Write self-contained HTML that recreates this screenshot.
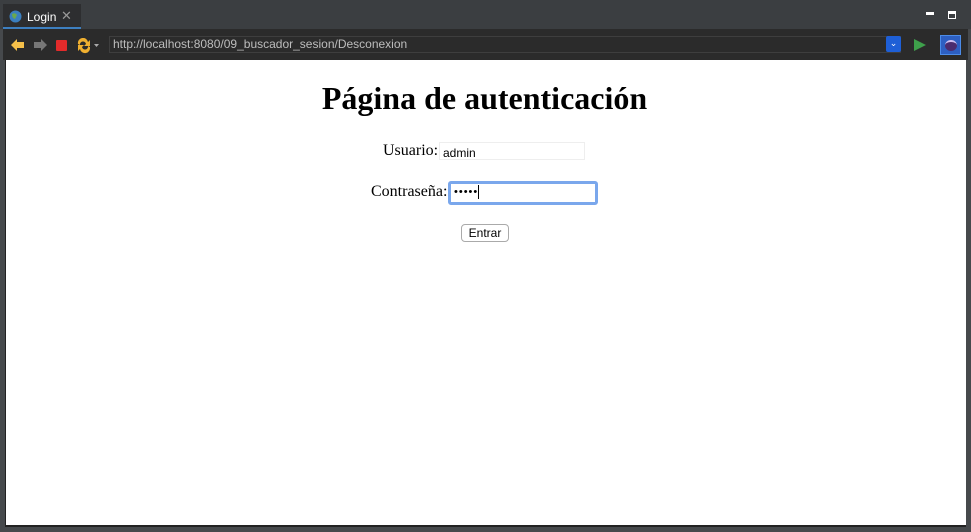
<!DOCTYPE html>
<html><head><meta charset="utf-8"><style>
*{margin:0;padding:0;box-sizing:border-box}
body{width:971px;height:532px;background:#46494c;position:relative;overflow:hidden;font-family:"Liberation Sans",sans-serif}
.top{position:absolute;left:0;top:0;width:971px;height:29px;background:#3b3e41}
.tab{position:absolute;left:3px;top:4px;width:78px;height:25px;background:#2d2e30;border-bottom:2px solid #3d7fc0}
.tab span{position:absolute;left:24px;top:6px;color:#fff;font-size:12px}
.tool{position:absolute;left:3px;top:29px;width:965px;height:31px;background:#2b2b2b}
.url{position:absolute;left:109px;top:36px;width:792px;height:17px;background:#2b2b2b;border:1px solid #3e3e3e;color:#bdbdbd;font-size:12px;line-height:15px;padding-left:3px}
.content{position:absolute;left:5px;top:60px;width:961px;height:467px;background:#fff;border-left:1px solid #222;border-bottom:2px solid #222}
h1{position:absolute;left:-2px;width:961px;top:20px;text-align:center;font:bold 32px "Liberation Serif",serif}
.lbl{position:absolute;font:16px "Liberation Serif",serif}
</style></head><body>
<div class="top"></div>
<div class="tab"><svg style="position:absolute;left:6px;top:6px" width="13" height="13"><circle cx="6.5" cy="6.5" r="6" fill="#3a7fc0"/><path d="M3 4 Q6 2 8 5 L6 9 Q3 8 3 4Z" fill="#6aa84f"/></svg><span>Login</span><span style="left:58px;top:4px;color:#999;font-size:13px">✕</span></div>
<div style="position:absolute;left:926px;top:12px;width:8px;height:3px;background:#fff"></div>
<div style="position:absolute;left:948px;top:11px;width:8px;height:8px;border:1px solid #fff;border-top-width:3px"></div>
<div class="tool"></div>
<svg style="position:absolute;left:10px;top:38px" width="95" height="16">
<path d="M1 7 L7 1 V4 H14 V10 H7 V13Z" fill="#f5c04a"/>
<path d="M37 7 L31 1 V4 H24 V10 H31 V13Z" fill="#777"/>
<rect x="46" y="2" width="11" height="11" rx="1" fill="#e32b2b"/>
<path d="M68 6 A5 5 0 0 1 78 4 L80 2 V8 H74 L76 6 A3 3 0 0 0 70 7Z" fill="#f0b030"/>
<path d="M80 9 A5 5 0 0 1 70 11 L68 13 V7 H74 L72 9 A3 3 0 0 0 78 8Z" fill="#f0b030"/>
<path d="M84 6 L89 6 L86.5 9Z" fill="#aaa"/>
</svg>
<div class="url">http://localhost:8080/09_buscador_sesion/Desconexion</div>
<div style="position:absolute;left:886px;top:36px;width:15px;height:16px;background:#1e5fd6;border-radius:2px;color:#fff;font-size:9px;text-align:center;line-height:15px">⌄</div>
<svg style="position:absolute;left:913px;top:38px" width="14" height="14"><path d="M1 1 L13 7 L1 13Z" fill="#3ea04b"/></svg>
<div style="position:absolute;left:940px;top:35px;width:21px;height:20px;background:#2d5fc2;border:1px solid #4c8ce8"><div style="margin:4px auto;width:12px;height:11px;border-radius:50%;background:#4b2c6e;border-top:2px solid #d0c0f0"></div></div>
<div class="content">
<h1>Página de autenticación</h1>
<div class="lbl" style="left:377px;top:82px">Usuario:</div>
<div style="position:absolute;left:433px;top:82px;width:146px;height:18px;border:1px solid #eee;font-size:12px;padding:3px 0 0 3px">admin</div>
<div class="lbl" style="left:365px;top:123px">Contraseña:</div>
<div style="position:absolute;left:442px;top:121px;width:150px;height:24px;border:3px solid #7aa7ec;border-radius:3px;font-size:11px;padding:0 0 0 3px;line-height:17px;letter-spacing:1px">•••••<span style="border-left:1px solid #000;font-size:0;display:inline-block;height:14px;vertical-align:middle"></span></div>
<div style="position:absolute;left:455px;top:164px;width:48px;height:18px;border:1px solid #aaa;border-radius:4px;font-size:12px;text-align:center;line-height:16px">Entrar</div>
</div>
</body></html>
